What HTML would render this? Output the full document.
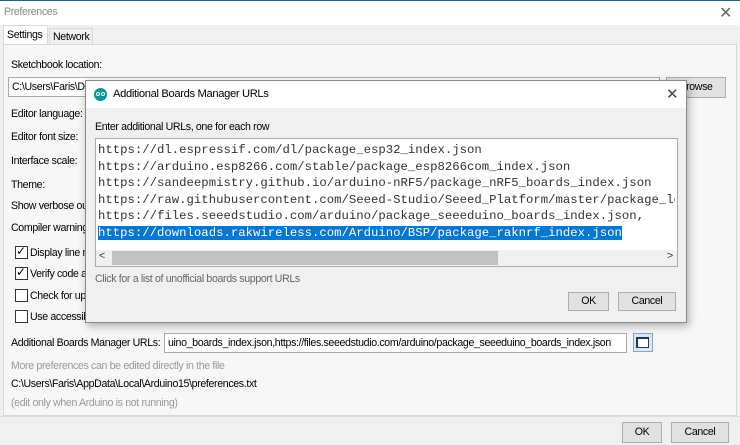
<!DOCTYPE html>
<html><head><style>
*{box-sizing:border-box;margin:0;padding:0}
body{width:740px;height:445px;overflow:hidden;background:#f0f0f0;font-family:"Liberation Sans",sans-serif;font-size:10.6px;color:#000;position:relative;letter-spacing:-0.35px}
.a{position:absolute;white-space:nowrap}
.btn{position:absolute;background:#e1e1e1;border:1px solid #adadad;text-align:center}
.cb{position:absolute;width:13px;height:13px;border:1px solid #333;background:#fff}
.mono{font-family:"Liberation Mono",monospace;font-size:12.3px;letter-spacing:0;color:#333}
</style></head><body>
<div class="a" style="left:0;top:0;width:740px;height:25px;background:#fff;border-top:1px solid #2b5f78"></div>
<div class="a" style="left:4px;top:6px;color:#888">Preferences</div>
<div class="a" style="left:719px;top:3px;font-size:16px;color:#666">✕</div>
<div class="a" style="left:3px;top:25px;width:45px;height:20px;background:#fff;border:1px solid #d9d9d9;border-bottom:none"></div>
<div class="a" style="left:7px;top:29px">Settings</div>
<div class="a" style="left:49px;top:28px;width:44px;height:17px;border:1px solid #d9d9d9;border-bottom:none"></div>
<div class="a" style="left:53px;top:31px">Network</div>
<div class="a" style="left:3px;top:44px;width:734px;height:372px;border:1px solid #d9d9d9;background:#f7f7f7"></div>
<div class="a" style="left:11px;top:59px">Sketchbook location:</div>
<div class="a" style="left:8px;top:77px;width:652px;height:20px;background:#fff;border:1px solid #aaa"></div>
<div class="a" style="left:12px;top:81px">C:\Users\Faris\D</div>
<div class="btn" style="left:666px;top:77px;width:60px;height:21px;line-height:19px">Browse</div>
<div class="a" style="left:11px;top:108px">Editor language:</div>
<div class="a" style="left:11px;top:131px">Editor font size:</div>
<div class="a" style="left:11px;top:155px">Interface scale:</div>
<div class="a" style="left:11px;top:179px">Theme:</div>
<div class="a" style="left:11px;top:200px">Show verbose ou</div>
<div class="a" style="left:11px;top:222px">Compiler warning</div>
<div class="cb" style="left:15px;top:246px"></div><div class="a" style="left:16px;top:244px;font-size:12px">✓</div>
<div class="a" style="left:30px;top:247px">Display line n</div>
<div class="cb" style="left:15px;top:267px"></div><div class="a" style="left:16px;top:265px;font-size:12px">✓</div>
<div class="a" style="left:30px;top:268px">Verify code a</div>
<div class="cb" style="left:15px;top:289px"></div>
<div class="a" style="left:30px;top:290px">Check for up</div>
<div class="cb" style="left:15px;top:310px"></div>
<div class="a" style="left:30px;top:311px">Use accessib</div>
<div class="a" style="left:11px;top:337px">Additional Boards Manager URLs:</div>
<div class="a" style="left:164px;top:333px;width:463px;height:20px;background:#fff;border:1px solid #aaa;overflow:hidden;padding:3px 0 0 3px">uino_boards_index.json,https://files.seeedstudio.com/arduino/package_seeeduino_boards_index.json</div>
<div class="a" style="left:633px;top:333px;width:20px;height:19px;border:1px solid #7aa7d8;background:#dce8f5"></div>
<div class="a" style="left:636px;top:337px;width:13px;height:11px;border:2px solid #1f3a5f;border-right-width:1px;border-bottom-width:1px;background:#fff"></div>
<div class="a" style="left:11px;top:360px;color:#999">More preferences can be edited directly in the file</div>
<div class="a" style="left:11px;top:378px">C:\Users\Faris\AppData\Local\Arduino15\preferences.txt</div>
<div class="a" style="left:11px;top:397px;color:#999">(edit only when Arduino is not running)</div>
<div class="a" style="left:0;top:416px;width:740px;height:1px;background:#ddd"></div>
<div class="btn" style="left:622px;top:422px;width:40px;height:21px;line-height:19px">OK</div>
<div class="btn" style="left:671px;top:422px;width:58px;height:21px;line-height:19px">Cancel</div>

<div class="a" style="left:85px;top:80px;width:602px;height:243px;background:#f0f0f0;border:1px solid #888;box-shadow:2px 3px 8px rgba(0,0,0,.3)"></div>
<div class="a" style="left:86px;top:81px;width:600px;height:27px;background:#fff"></div>
<div class="a" style="left:94px;top:88px;width:13px;height:13px;border-radius:50%;background:#00979c"></div>
<div class="a" style="left:96px;top:92px;width:4px;height:4px;border:1px solid #fff;border-radius:50%"></div>
<div class="a" style="left:101px;top:92px;width:4px;height:4px;border:1px solid #fff;border-radius:50%"></div>
<div class="a" style="left:113px;top:88px;font-size:11.2px">Additional Boards Manager URLs</div>
<div class="a" style="left:666px;top:85px;font-size:15px;color:#444">✕</div>
<div class="a" style="left:95px;top:121px">Enter additional URLs, one for each row</div>
<div class="a" style="left:95px;top:138px;width:583px;height:129px;background:#fff;border:1px solid #aaa;overflow:hidden"></div>
<div class="a mono" style="left:98px;top:142px;line-height:16.6px;width:577px;overflow:hidden">https://dl.espressif.com/dl/package_esp32_index.json<br>https://arduino.esp8266.com/stable/package_esp8266com_index.json<br>https://sandeepmistry.github.io/arduino-nRF5/package_nRF5_boards_index.json<br>https://raw.githubusercontent.com/Seeed-Studio/Seeed_Platform/master/package_le<br>https://files.seeedstudio.com/arduino/package_seeeduino_boards_index.json,<br><span style="background:#0078d7;color:#fff">https://downloads.rakwireless.com/Arduino/BSP/package_raknrf_index.json</span></div>
<div class="a" style="left:96px;top:250px;width:581px;height:16px;background:#f0f0f0"></div>
<div class="a" style="left:112px;top:251px;width:386px;height:14px;background:#c1c1c1"></div>
<div class="a" style="left:99px;top:250px;color:#333">&lt;</div>
<div class="a" style="left:667px;top:250px;color:#333">&gt;</div>
<div class="a" style="left:95px;top:273px;color:#666">Click for a list of unofficial boards support URLs</div>
<div class="btn" style="left:568px;top:292px;width:41px;height:19px;line-height:17px">OK</div>
<div class="btn" style="left:618px;top:292px;width:58px;height:19px;line-height:17px">Cancel</div>
</body></html>
